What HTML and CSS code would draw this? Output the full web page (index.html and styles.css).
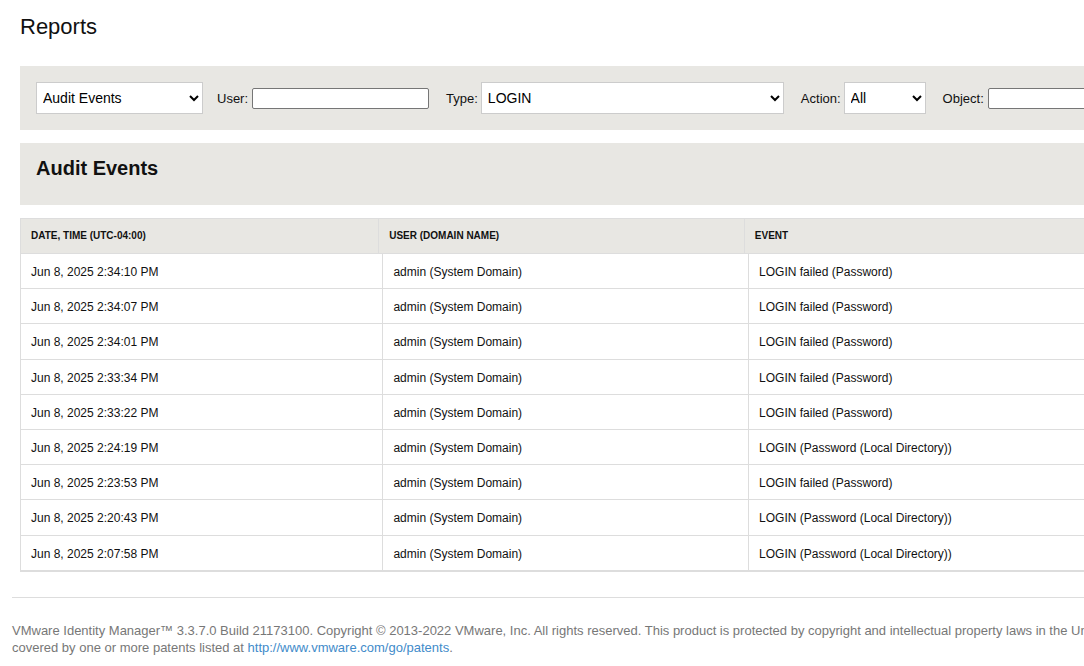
FILE: index.html
```html
<!DOCTYPE html>
<html lang="en">
<head>
<meta charset="utf-8">
<meta name="viewport" content="width=device-width, initial-scale=1">
<title>Reports</title>
<link rel="stylesheet" href="styles.css">
</head>
<body>
<main class="page">
  <h1 class="page-title">Reports</h1>

  <form class="filters">
    <select class="select select-report" aria-label="Report"><option>Audit Events</option></select>
    <div class="field field-first">
      <label for="user">User:</label>
      <input class="text-input" id="user" type="text">
    </div>
    <div class="field field-select">
      <label for="type">Type:</label>
      <select class="select select-type" id="type"><option>LOGIN</option></select>
    </div>
    <div class="field field-select">
      <label for="action">Action:</label>
      <select class="select select-action" id="action"><option>All</option></select>
    </div>
    <div class="field">
      <label for="object">Object:</label>
      <input class="text-input" id="object" type="text">
    </div>
  </form>

  <section class="report-header">
    <h2 class="report-title">Audit Events</h2>
  </section>

  <table class="events">
    <thead>
      <tr><th scope="col">DATE, TIME (UTC-04:00)</th><th scope="col">USER (DOMAIN NAME)</th><th scope="col">EVENT</th></tr>
    </thead>
    <tbody>
      <tr><td>Jun 8, 2025 2:34:10 PM</td><td>admin (System Domain)</td><td>LOGIN failed (Password)</td></tr>
      <tr><td>Jun 8, 2025 2:34:07 PM</td><td>admin (System Domain)</td><td>LOGIN failed (Password)</td></tr>
      <tr><td>Jun 8, 2025 2:34:01 PM</td><td>admin (System Domain)</td><td>LOGIN failed (Password)</td></tr>
      <tr><td>Jun 8, 2025 2:33:34 PM</td><td>admin (System Domain)</td><td>LOGIN failed (Password)</td></tr>
      <tr><td>Jun 8, 2025 2:33:22 PM</td><td>admin (System Domain)</td><td>LOGIN failed (Password)</td></tr>
      <tr><td>Jun 8, 2025 2:24:19 PM</td><td>admin (System Domain)</td><td>LOGIN (Password (Local Directory))</td></tr>
      <tr><td>Jun 8, 2025 2:23:53 PM</td><td>admin (System Domain)</td><td>LOGIN failed (Password)</td></tr>
      <tr><td>Jun 8, 2025 2:20:43 PM</td><td>admin (System Domain)</td><td>LOGIN (Password (Local Directory))</td></tr>
      <tr><td>Jun 8, 2025 2:07:58 PM</td><td>admin (System Domain)</td><td>LOGIN (Password (Local Directory))</td></tr>
    </tbody>
  </table>
</main>

<footer class="footer">
  VMware Identity Manager™ 3.3.7.0 Build 21173100. Copyright © 2013-2022 VMware, Inc. All rights reserved. This product is protected by copyright and intellectual property laws in the United<br>
  covered by one or more patents listed at <a href="http://www.vmware.com/go/patents">http://www.vmware.com/go/patents</a>.
</footer>
</body>
</html>
```
FILE: styles.css
```css
* {
  box-sizing: border-box;
}

body {
  margin: 0;
  overflow-x: hidden;
  background: #fff;
  color: #111;
  font-family: "Liberation Sans", Arial, sans-serif;
  font-size: 12px;
}

.page {
  padding: 13px 0 0 20px;
}

.page-title {
  margin: 0 0 25px;
  font-size: 22px;
  font-weight: 400;
  line-height: 28px;
}

.filters {
  display: flex;
  align-items: center;
  gap: 17px;
  padding: 16px;
  overflow: hidden;
  background: #e8e7e3;
  font-size: 13px;
}

.filters > * {
  flex-shrink: 0;
}

.field {
  display: flex;
  align-items: center;
  gap: 4px;
}

.field-first {
  margin-left: -3px;
}

.field-select {
  gap: 3px;
}

.select {
  height: 32px;
  padding: 0 2px;
  border: 1px solid #ccc;
  border-radius: 0;
  background-color: #fff;
  color: #000;
  font-family: inherit;
  font-size: 14px;
}

.select-report {
  width: 167px;
}

.select-type {
  width: 303px;
}

.select-action {
  width: 82px;
}

.text-input {
  width: 177px;
  height: 21px;
  padding: 1px 2px;
  border: 1px solid #767676;
  border-radius: 2px;
  background: #fff;
  font: inherit;
}

.report-header {
  margin: 13px 0;
  padding: 13px 16px 25px;
  background: #e8e7e3;
}

.report-title {
  margin: 0;
  font-size: 20px;
  line-height: 24px;
}

.events {
  display: block;
  border: 1px solid #ddd;
  border-width: 1px 0 1px 1px;
}

.events thead,
.events tbody {
  display: table;
  width: 100%;
  table-layout: fixed;
  border-spacing: 0;
}

.events th,
.events td {
  border-bottom: 1px solid #ddd;
  text-align: left;
}

.events th + th,
.events td + td {
  border-left: 1px solid #ddd;
}

.events th {
  width: 33.6%;
  padding: 8px 10px 9px;
  background: #e8e7e3;
  font-size: 10px;
  line-height: 17px;
}

.events th:nth-child(2),
.events td:nth-child(2) {
  width: 34.4%;
}

.events td {
  width: 34%;
  padding: 9px 10px 6px;
  line-height: 1.6;
}

.events th:last-child,
.events td:last-child {
  width: auto;
}

.footer {
  margin: 25px 0 0 12px;
  padding: 24px 0 8px;
  border-top: 1px solid #ddd;
  color: #777;
  font-size: 13px;
  line-height: 17px;
  white-space: nowrap;
}

.footer a {
  color: #428bca;
  text-decoration: none;
}
```
